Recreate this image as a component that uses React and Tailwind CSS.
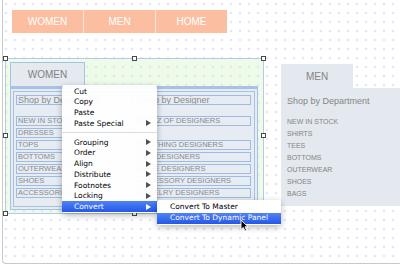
import { Fragment } from 'react'

const menuItems = [
    { label: 'Cut' },
    { label: 'Copy' },
    { label: 'Paste' },
    { label: 'Paste Special', sub: true },
    { sep: true },
    { label: 'Grouping', sub: true },
    { label: 'Order', sub: true },
    { label: 'Align', sub: true },
    { label: 'Distribute', sub: true },
    { label: 'Footnotes', sub: true },
    { label: 'Locking', sub: true },
    { label: 'Convert', sub: true, active: true },
]

const womenLeft = ['NEW IN STOCK', 'DRESSES', 'TOPS', 'BOTTOMS', 'OUTERWEAR', 'SHOES', 'ACCESSORIES']
const womenRight = ['A TO Z OF DESIGNERS', null, 'CLOTHING DESIGNERS', 'BAG DESIGNERS', 'SHOE DESIGNERS', 'ACCESSORY DESIGNERS', 'JEWELRY DESIGNERS']
const menList = ['NEW IN STOCK', 'SHIRTS', 'TEES', 'BOTTOMS', 'OUTERWEAR', 'SHOES', 'BAGS']

const Handle = ({ className }) => (
    <div className={`absolute w-[5px] h-[5px] bg-white border border-[#4a4a4a] ${className}`} />
)

const Arrow = ({ white }) => (
    <div className={`w-0 h-0 border-y-[3px] border-y-transparent border-l-[5px] ${white ? 'border-l-white' : 'border-l-[#505050]'}`} />
)

// text box widget inside the WOMEN panel
const Field = ({ children, big }) => (
    <div className={`h-[10px] border border-[#9dbce5] text-[#8a8a8a] whitespace-nowrap overflow-hidden pl-[1px] ${big ? 'text-[9px] leading-[8px]' : 'text-[7.5px] leading-[8px]'}`}>
        {children}
    </div>
)

export default function App() {
    return (
        <div className="relative w-[400px] h-[265px] bg-white overflow-hidden font-['Liberation_Sans',Arial,sans-serif]">
            {/* canvas window */}
            <div className="absolute left-[2px] top-0 w-[398px] h-[264px] border-l border-b border-[#c9c9c9] rounded-bl-[4px] bg-[radial-gradient(circle,#b4bbf6_0.7px,transparent_1.1px)] bg-[length:9px_9px] bg-[position:-1.5px_-0.5px]" />

            {/* top nav */}
            <div className="absolute left-[12px] top-[10px] w-[215px] h-[23px] flex bg-[#fde4d8] gap-px">
                {['WOMEN', 'MEN', 'HOME'].map((t) => (
                    <div key={t} className="flex-1 bg-[#fcbea1] flex items-center justify-center text-white text-[10px]">
                        {t}
                    </div>
                ))}
            </div>

            {/* selected group */}
            <div className="absolute left-[5px] top-[58px] w-[259px] h-[156px] border border-[#b3cbe9] bg-[#effbe9]">
                <div className="absolute inset-0 bg-[radial-gradient(circle,#bfcaf2_0.7px,transparent_1.1px)] bg-[length:9px_9px] bg-[position:4.5px_3.5px]" />
            </div>

            {/* WOMEN panel */}
            <div className="absolute left-[10px] top-[62px] w-[248px] flex flex-col">
                <div className="w-[75px] h-[24px] bg-[#e4eaf0] border border-b-0 border-[#a6c1e4] flex items-center justify-center text-[10px] text-[#808080]">
                    WOMEN
                </div>
                <div className="h-[3px] bg-[#a8c2e6]" />
                <div className="h-[121px] bg-[#e6ecf1] border-x border-b border-[#a6c1e4] p-[2px]">
                    <div className="h-full border border-[#a6c1e4] pt-[3px] pl-[2px] pr-[3px] flex gap-[4px]">
                        <div className="w-[116px] flex flex-col">
                            <Field big>Shop by Department</Field>
                            <div className="mt-[11px] flex flex-col gap-[2px]">
                                {womenLeft.map((t) => (
                                    <Field key={t}>{t}</Field>
                                ))}
                            </div>
                        </div>
                        <div className="flex-1 flex flex-col">
                            <Field big>Shop by Designer</Field>
                            <div className="mt-[11px] flex flex-col gap-[2px]">
                                {womenRight.map((t, i) =>
                                    t ? <Field key={i}>{t}</Field> : <div key={i} className="h-[10px]" />
                                )}
                            </div>
                        </div>
                    </div>
                </div>
            </div>

            {/* selection handles */}
            <Handle className="left-[3px] top-[56px]" />
            <Handle className="left-[132px] top-[56px]" />
            <Handle className="left-[261px] top-[56px]" />
            <Handle className="left-[3px] top-[133px]" />
            <Handle className="left-[261px] top-[133px]" />
            <Handle className="left-[3px] top-[211px]" />
            <Handle className="left-[132px] top-[211px]" />

            {/* MEN panel */}
            <div className="absolute left-[281px] top-[64px] w-[119px] flex flex-col text-[#858585]">
                <div className="w-[72px] h-[24px] bg-[#e3e9ee] flex items-center justify-center text-[10px]">MEN</div>
                <div className="h-[118px] bg-[#e3e9ee] pl-[6px] pt-[7px]">
                    <div className="text-[9px] leading-[12px]">Shop by Department</div>
                    <div className="mt-[9px] flex flex-col">
                        {menList.map((t) => (
                            <div key={t} className="text-[7px] leading-[12px]">{t}</div>
                        ))}
                    </div>
                </div>
            </div>

            {/* context menu */}
            <div className="absolute left-[62px] top-[85px] w-[95px] bg-white/95 rounded-[3px] shadow-[0_2px_6px_rgba(0,0,0,0.3)] pt-[1px] pb-[1.3px] font-['DejaVu_Sans',sans-serif] text-[7.5px] text-black">
                {menuItems.map((item, i) => (
                    <Fragment key={i}>
                        {item.sep ? (
                            <div className="h-[8.3px] flex items-center">
                                <div className="w-full h-px bg-[#dcdcdc]" />
                            </div>
                        ) : (
                            <div className={`h-[10.7px] flex items-center justify-between pl-[12px] pr-[6px] ${item.active ? 'bg-linear-to-b from-[#5282f4] to-[#2457e7] text-white' : ''}`}>
                                <span>{item.label}</span>
                                {item.sub && <Arrow white={item.active} />}
                            </div>
                        )}
                    </Fragment>
                ))}
            </div>

            {/* submenu */}
            <div className="absolute left-[157px] top-[200px] w-[124px] bg-white/95 rounded-[3px] shadow-[0_2px_6px_rgba(0,0,0,0.3)] pt-[1.5px] pb-[1px] font-['DejaVu_Sans',sans-serif] text-[7.5px] text-black">
                <div className="h-[11px] flex items-center pl-[13px]">Convert To Master</div>
                <div className="h-[11px] flex items-center pl-[13px] bg-linear-to-b from-[#5282f4] to-[#2457e7] text-white">
                    Convert To Dynamic Panel
                </div>
            </div>

            {/* mouse pointer */}
            <svg className="absolute left-[240px] top-[219px]" width="9" height="13" viewBox="0 0 9 13">
                <path d="M1 1 L1 10.5 L3.3 8.4 L5 12 L6.6 11.3 L5 7.8 L8 7.8 Z" fill="#000" stroke="#fff" strokeWidth="0.9" strokeLinejoin="round" />
            </svg>
        </div>
    )
}
